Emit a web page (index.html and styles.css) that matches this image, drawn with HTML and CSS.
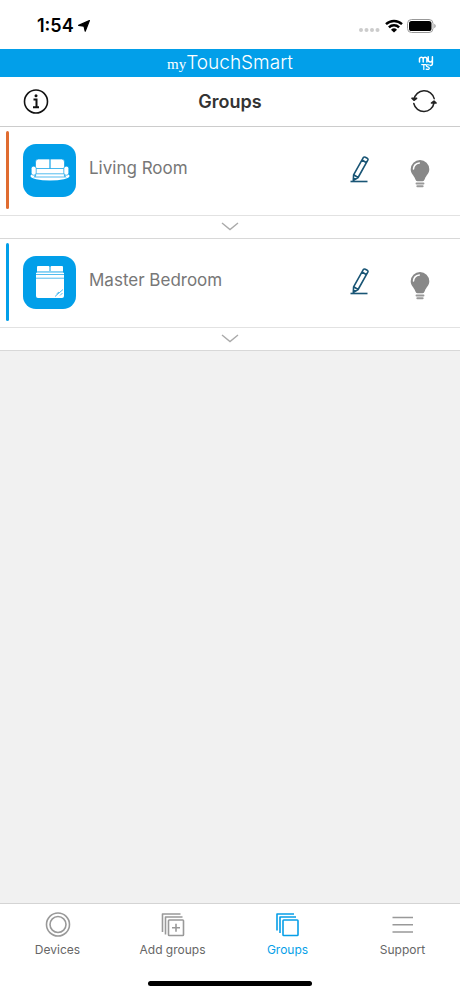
FILE: index.html
```html
<!DOCTYPE html>
<html lang="en">
<head>
<meta charset="utf-8">
<meta name="viewport" content="width=device-width, initial-scale=1">
<title>Groups</title>
<link rel="stylesheet" href="styles.css">
</head>
<body>
<div class="status">
  <div class="status-side">
    <span class="time">1:54</span>
    <svg width="12" height="12" viewBox="0 0 12 12" aria-hidden="true"><path d="M11.400.6 7.200 11.200 6 6.200.6 5.400Z" fill="#000" stroke="#000" stroke-width="1.200" stroke-linejoin="round"/></svg>
  </div>
  <div class="status-side">
    <svg class="cell" width="22" height="18" viewBox="0 0 22 18" aria-hidden="true"><g fill="#ccc"><circle cx="2" cy="13" r="2"/><circle cx="7.500" cy="13" r="2"/><circle cx="13" cy="13" r="2"/><circle cx="18.500" cy="13" r="2"/></g></svg>
    <svg width="18" height="14" viewBox="0 0 18 14" aria-hidden="true"><g fill="none" stroke="#000" stroke-width="2.400"><path d="M1 5.200a11.500 11.500 0 0 1 16 0"/><path d="M3.900 8.300a7.300 7.300 0 0 1 10.200 0"/></g><path d="M9 13.600 6 10.700a4.300 4.300 0 0 1 6 0Z"/></svg>
    <svg width="29" height="14" viewBox="0 0 29 14" aria-hidden="true"><rect x=".5" y=".5" width="25.500" height="13" rx="4" fill="none" stroke="#999"/><rect x="2" y="2" width="22.500" height="10" rx="2.600"/><path d="M27.300 4.800c1.800.8 1.800 3.600 0 4.400Z" fill="#999"/></svg>
  </div>
</div>
<div class="brand">
  <div class="brand-name"><span class="brand-my">my</span>TouchSmart</div>
  <svg class="brand-mark" width="16" height="17" viewBox="0 0 16 17" fill="none" stroke="#fff" stroke-linecap="round" stroke-linejoin="round" aria-hidden="true"><path stroke-width="1.500" d="M1.500 7V3.500a2 2 0 0 1 3.700 0V7M5.200 3.500a2 2 0 0 1 3.700 0V7M10.200 1.700v3.100a2.100 2.100 0 0 0 4.200 0V1.700M14.400 4.800v3.700q0 2-2 2"/><path stroke-width="1.200" d="M3.700 9.600h4.200M5.800 9.600v4.900M11.300 10q-3-.8-3 .8c0 1.500 3 .8 3 2.400q0 1.800-3.200.9"/></svg>
</div>
<header class="header">
  <button class="icon-button" type="button" aria-label="Information">
    <svg width="26" height="26" viewBox="0 0 26 26" fill="none" stroke="#111" stroke-width="1.600"><circle cx="13" cy="12.500" r="11.500"/><path stroke-width="2" d="M10.500 10.500h3v7.500M10 18.200h6"/><circle cx="13" cy="6.800" r="1.500" fill="#111" stroke="none"/></svg>
  </button>
  <h1>Groups</h1>
  <button class="icon-button" type="button" aria-label="Refresh">
    <svg width="26" height="26" viewBox="0 0 26 26" fill="none" stroke="#222" stroke-width="1.500" stroke-linecap="round" stroke-linejoin="round"><path d="M3 10.500a10.300 10.300 0 0 1 20.200-.8M23 14a10.300 10.300 0 0 1-20.200.5"/><path fill="#222" d="M.9 9.200 3 11.300l2.600-2ZM20.400 14l2.600-2 2.100 2Z"/></svg>
  </button>
</header>
<main class="content">
  <section class="card">
    <div class="card-main">
      <span class="bar bar-orange"></span>
      <span class="tile">
        <svg width="40" height="26" viewBox="0 0 40 26" aria-hidden="true"><ellipse cx="20" cy="19" rx="19.500" ry="4.500" fill="#fff"/><g fill="#fff" stroke="#079fe8" stroke-width=".7"><path d="M5.500 11V5q0-3 3-3H20v10H5.500ZM20 2h11.500q3 0 3 3v7H20Z"/><path d="M5 11.500h30V20H5Z"/><path d="M5 16.800h30"/><rect x="1.200" y="9.200" width="5" height="9" rx="2.300"/><rect x="33.800" y="9.200" width="5" height="9" rx="2.300"/><path d="m6 18-2 2.700M34 18l2 2.700"/></g></svg>
      </span>
      <h2>Living Room</h2>
      <button class="icon-button" type="button" aria-label="Edit Living Room">
        <svg width="22" height="28" viewBox="0 0 22 28" fill="none" stroke="#195575" stroke-width="1.600" stroke-linejoin="round"><path d="M14.300 1.600q.8-1 2-.4l2 1.100q1.100.7.500 1.900L9.100 21.500l-4.800 3.100.3-5.800ZM13 4l4.600 2.700M4.600 18.800l4.500 2.700M4.400 22l2 1.200"/><path d="M1.500 25.500h17"/></svg>
      </button>
      <button class="icon-button" type="button" aria-label="Switch Living Room">
        <svg class="bulb" width="20" height="28" viewBox="0 0 20 28"><path fill="#888" d="M10 0a9.300 9.300 0 0 1 9.300 9.300c0 4.500-3.100 5.800-4.500 9.600q-.7 2.300-2.200 2.300H7.400q-1.500 0-2.200-2.300C3.800 15.100.7 13.800.7 9.300A9.300 9.300 0 0 1 10 0Z"/><path d="M3.500 9q.4-5.300 5.800-6" fill="none" stroke="#fff" stroke-width="1.500" stroke-linecap="round"/><path d="M6.500 23.500h7M7.300 26.300h5.400" stroke="#999" stroke-width="1.900" stroke-linecap="round"/></svg>
      </button>
    </div>
    <button class="expand" type="button" aria-label="Show Living Room devices"><svg width="18" height="9" viewBox="0 0 18 9" fill="none" stroke="#aaa" stroke-width="1.400"><path d="m1 1 8 6.500L17 1"/></svg></button>
  </section>
  <section class="card">
    <div class="card-main">
      <span class="bar bar-blue"></span>
      <span class="tile">
        <svg width="28" height="34" viewBox="0 0 28 34" aria-hidden="true"><g fill="#fff"><path d="M1 7V2q0-1 1-1h10.500q1 0 1 1v5ZM14.500 7V2q0-1 1-1H26q1 0 1 1v5Z"/><path d="M1 6h26v1.500H1ZM0 7.700h28V31q0 2-2 2H2q-2 0-2-2Z"/></g><g stroke="#079fe8" stroke-width=".7"><path d="M1 6.800h26M0 9.500h28M0 13.200h28M19 31.500l8-7M20.500 29l2.500-2M24 30.500l2.500-2.500"/></g></svg>
      </span>
      <h2>Master Bedroom</h2>
      <button class="icon-button" type="button" aria-label="Edit Master Bedroom">
        <svg width="22" height="28" viewBox="0 0 22 28" fill="none" stroke="#195575" stroke-width="1.600" stroke-linejoin="round"><path d="M14.300 1.600q.8-1 2-.4l2 1.100q1.100.7.500 1.900L9.100 21.500l-4.800 3.100.3-5.800ZM13 4l4.600 2.700M4.600 18.800l4.500 2.700M4.400 22l2 1.200"/><path d="M1.500 25.500h17"/></svg>
      </button>
      <button class="icon-button" type="button" aria-label="Switch Master Bedroom">
        <svg class="bulb" width="20" height="28" viewBox="0 0 20 28"><path fill="#888" d="M10 0a9.300 9.300 0 0 1 9.300 9.300c0 4.500-3.100 5.800-4.500 9.600q-.7 2.300-2.200 2.300H7.400q-1.500 0-2.200-2.300C3.800 15.100.7 13.800.7 9.300A9.300 9.300 0 0 1 10 0Z"/><path d="M3.500 9q.4-5.300 5.800-6" fill="none" stroke="#fff" stroke-width="1.500" stroke-linecap="round"/><path d="M6.500 23.500h7M7.300 26.300h5.400" stroke="#999" stroke-width="1.900" stroke-linecap="round"/></svg>
      </button>
    </div>
    <button class="expand" type="button" aria-label="Show Master Bedroom devices"><svg width="18" height="9" viewBox="0 0 18 9" fill="none" stroke="#aaa" stroke-width="1.400"><path d="m1 1 8 6.500L17 1"/></svg></button>
  </section>
</main>
<footer class="footer">
  <nav class="tabs">
    <a href="#devices"><svg width="26" height="26" viewBox="0 0 26 26" fill="none" stroke="#999" stroke-width="1.600"><circle cx="13" cy="12.500" r="11.500"/><circle cx="13" cy="12.500" r="8"/></svg>Devices</a>
    <a href="#add"><svg width="26" height="26" viewBox="0 0 26 26" fill="none" stroke="#999" stroke-width="1.600" stroke-linejoin="round"><path d="M2.500 20V2h18M5.500 22.500V5h17"/><rect x="8.500" y="8" width="15" height="15.500" rx=".8"/><path d="M16 11.800v8M12 15.800h8"/></svg>Add groups</a>
    <a href="#groups" class="active" aria-current="page"><svg width="26" height="26" viewBox="0 0 26 26" fill="none" stroke="#079fe8" stroke-width="1.600" stroke-linejoin="round"><path d="M2 18.500V2h17M5 21V5h16"/><rect x="8" y="8" width="15" height="15.500" rx=".8"/></svg>Groups</a>
    <a href="#support"><svg width="26" height="26" viewBox="0 0 26 26" fill="none" stroke="#999" stroke-width="1.600"><path d="M2.500 5.500H23M2.500 12.800H23M2.500 20H23"/></svg>Support</a>
  </nav>
  <div class="home"></div>
</footer>
</body>
</html>
```
FILE: styles.css
```css
* { box-sizing: border-box; }

body {
  margin: 0;
  min-height: 100vh;
  display: flex;
  flex-direction: column;
  background: #fff;
  color: #333;
  font-family: Inter, "Liberation Sans", sans-serif;
}

svg { display: block; flex: none; }

button {
  margin: 0;
  padding: 0;
  border: 0;
  background: none;
}

.status {
  display: flex;
  justify-content: space-between;
  align-items: center;
  height: 49px;
  padding: 2px 24px 0 37px;
}

.status-side {
  display: flex;
  align-items: center;
  gap: 4px;
}

.time {
  color: #000;
  font-size: 18px;
  font-weight: 600;
}

.brand {
  display: grid;
  grid-template-columns: 1fr auto 1fr;
  align-items: center;
  height: 28px;
  padding: 0 26px;
  background: #029fe9;
  color: #fff;
}

.brand-name {
  grid-column: 2;
  font-size: 19px;
  font-weight: 300;
  line-height: 28px;
}

.brand-my {
  font-family: "Liberation Serif", serif;
  font-size: 15px;
}

.brand-mark { justify-self: end; }

.header {
  display: flex;
  align-items: center;
  justify-content: space-between;
  height: 50px;
  padding: 0 23px;
  border-bottom: 1px solid #ccc;
}

.header h1 {
  margin: 0;
  font-size: 18px;
  font-weight: 600;
}

.content {
  flex: 1;
  background: #f1f1f1;
}

.card {
  background: #fff;
  border-bottom: 1px solid #d8d8d8;
}

.card-main {
  display: flex;
  align-items: center;
  height: 88px;
  padding: 0 30px 2px 6px;
}

.bar {
  width: 3px;
  height: 78px;
  margin-right: 14px;
  border-radius: 2px;
}

.bar-orange { background: #e06c30; }
.bar-blue { background: #029fe9; }

.tile {
  display: flex;
  align-items: center;
  justify-content: center;
  width: 53px;
  height: 53px;
  border-radius: 13px;
  background: #029fe9;
}

.card h2 {
  flex: 1;
  margin: 0;
  padding: 0 0 5px 13px;
  color: #777;
  font-size: 17px;
  font-weight: 400;
}

.card .icon-button + .icon-button { margin-left: 39px; }

.bulb { margin-top: 8px; }

.expand {
  display: flex;
  align-items: center;
  justify-content: center;
  width: 100%;
  height: 23px;
  padding-bottom: 2px;
  border-top: 1px solid #e2e2e2;
}

.footer {
  border-top: 1px solid #d4d4d4;
  background: #fff;
}

.tabs {
  display: grid;
  grid-template-columns: repeat(4, 1fr);
  padding-top: 8px;
}

.tabs a {
  display: flex;
  flex-direction: column;
  align-items: center;
  gap: 4px;
  color: #666;
  font-size: 12px;
  line-height: 16px;
  text-decoration: none;
}

.tabs .active { color: #079fe8; }

.home {
  width: 164px;
  height: 5px;
  margin: 23px auto 10px;
  border-radius: 3px;
  background: #000;
}
```
